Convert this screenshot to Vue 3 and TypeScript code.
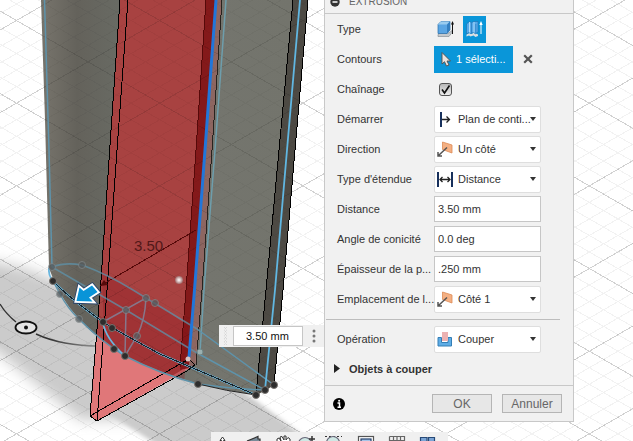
<script setup lang="ts">
import { computed, ref } from 'vue'

type IconName = 'start' | 'direction' | 'extent' | 'cut'

interface Field {
  id: string
  label: string
  kind: 'select' | 'text'
  value: string
  icon?: IconName
}

interface GridLine {
  d: string
}

interface Dot {
  x: number
  y: number
  tone: 'dark' | 'soft'
}

const fields = ref<Field[]>([
  { id: 'start', label: 'Démarrer', kind: 'select', value: 'Plan de conti...', icon: 'start' },
  { id: 'direction', label: 'Direction', kind: 'select', value: 'Un côté', icon: 'direction' },
  { id: 'extent', label: "Type d'étendue", kind: 'select', value: 'Distance', icon: 'extent' },
  { id: 'distance', label: 'Distance', kind: 'text', value: '3.50 mm' },
  { id: 'taper', label: 'Angle de conicité', kind: 'text', value: '0.0 deg' },
  { id: 'thickness', label: 'Épaisseur de la p...', kind: 'text', value: '.250 mm' },
  { id: 'wall', label: 'Emplacement de l...', kind: 'select', value: 'Côté 1', icon: 'direction' },
])
const operation: Field = { id: 'operation', label: 'Opération', kind: 'select', value: 'Couper', icon: 'cut' }
const chaining = ref(true)
const quickDistance = ref('3.50 mm')

// Isometric floor grid: every fifth line is a major one.
const STEP = 82.67 / 5
const SLOPE = 0.5773
const gridLines = (major: boolean): GridLine[] => {
  const lines: GridLine[] = []
  for (let k = -30; k < 60; k++) {
    if ((k % 5 === 0) !== major) continue
    const y = 20.5 + k * STEP
    const left = 16.5 * SLOPE
    const right = (633 - 16.5) * SLOPE
    lines.push({ d: `M0 ${(y - left).toFixed(1)}L633 ${(y + right).toFixed(1)}` })
    lines.push({ d: `M0 ${(y + left).toFixed(1)}L633 ${(y - right).toFixed(1)}` })
  }
  return lines
}
const majorPath = computed(() => gridLines(true).map((l) => l.d).join(''))
const minorPath = computed(() => gridLines(false).map((l) => l.d).join(''))

const dots: Dot[] = [
  { x: 52, y: 267, tone: 'soft' },
  { x: 82, y: 265, tone: 'soft' },
  { x: 60, y: 294, tone: 'soft' },
  { x: 79, y: 319, tone: 'soft' },
  { x: 126, y: 310, tone: 'soft' },
  { x: 146, y: 298, tone: 'soft' },
  { x: 155, y: 303, tone: 'soft' },
  { x: 137, y: 336, tone: 'soft' },
  { x: 53, y: 281, tone: 'dark' },
  { x: 103, y: 322, tone: 'dark' },
  { x: 112, y: 328, tone: 'dark' },
  { x: 114, y: 349, tone: 'dark' },
  { x: 125, y: 356, tone: 'dark' },
  { x: 198, y: 384, tone: 'dark' },
  { x: 256, y: 395, tone: 'dark' },
  { x: 265, y: 390, tone: 'dark' },
  { x: 274, y: 385, tone: 'dark' },
]
</script>

<template>
  <main class="workspace">
    <svg class="scene" viewBox="0 0 633 441" preserveAspectRatio="xMidYMin slice" aria-hidden="true">
      <defs>
        <linearGradient id="bodyShade" x1="42" x2="293" y1="0" y2="0" gradientUnits="userSpaceOnUse">
          <stop offset="0" stop-color="#77746c" />
          <stop offset="0.14" stop-color="#64625b" />
          <stop offset="0.3" stop-color="#686a63" />
          <stop offset="0.65" stop-color="#74756e" />
          <stop offset="1" stop-color="#73746c" />
        </linearGradient>
        <linearGradient id="arcFade" x1="0" x2="100" y1="0" y2="0" gradientUnits="userSpaceOnUse">
          <stop offset="0.5" stop-color="#333" />
          <stop offset="1" stop-color="#999" />
        </linearGradient>
        <radialGradient id="pearl">
          <stop offset="0" stop-color="#fff" />
          <stop offset="0.5" stop-color="#d5bcbc" />
          <stop offset="1" stop-color="#a06a6a" />
        </radialGradient>
        <filter id="soft" x="-20%" y="-20%" width="140%" height="140%">
          <feGaussianBlur stdDeviation="7" />
        </filter>
        <filter id="softer" x="-20%" y="-20%" width="140%" height="140%">
          <feGaussianBlur stdDeviation="2" />
        </filter>
        <clipPath id="bodyClip">
          <path d="M41 0H308L295 150L283 290L274 385L265 391L256 395Q225 390 198 384Q155 371 125 356Q90 333 79 319Q58 296 49 268L45 120Z" />
        </clipPath>
      </defs>

      <rect width="633" height="441" fill="#fff" />
      <path d="M-30 260Q30 262 70 290L180 330V420H80L-30 330Z" fill="#cbcbcb" filter="url(#soft)" />
      <path d="M-20 279L60 289L200 350L243 391L322 450H165L83 397Q35 363 -20 333Z" fill="#cbcbcb" filter="url(#softer)" />
      <g fill="none" stroke="#000" shape-rendering="crispEdges">
        <path :d="minorPath" opacity="0.05" />
        <path :d="majorPath" opacity="0.18" />
      </g>

      <!-- construction arc and origin -->
      <path d="M0 304Q6 314 16 322M36 334Q62 346 100 346" fill="none" stroke="url(#arcFade)" stroke-width="1.4" />
      <ellipse cx="26" cy="327.500" rx="10.500" ry="6" fill="#e4e4e4" stroke="#111" stroke-width="1.800" />
      <circle cx="26" cy="327.500" r="2" fill="#111" />

      <!-- solid body -->
      <g clip-path="url(#bodyClip)">
        <rect x="40" width="270" height="400" fill="url(#bodyShade)" />
        <path d="M293 0H308L295 150L283 290L274 385L256 395L266 290L279 150Z" fill="#4d4a44" />
      </g>

      <!-- cut preview -->
      <path d="M120 0L110 145L101 280L90 416L97 421L195 365L202 290L212 150L222 0Z" fill="#e07779" />
      <g clip-path="url(#bodyClip)">
        <path d="M120 0L110 145L101 280L90 416L97 421L182 370L186 290L196 150L206 0Z" fill="#a84241" />
        <path d="M206 0L196 150L186 290L180 370L189 368L195 290L205 150L216 0Z" fill="#84191a" />
        <path d="M216 0L205 150L194.500 290L189 368L195 365L202 290L212 150L222 0Z" fill="#8d6661" />
        <path d="M102 272Q150 297 188 326L184 385Q140 372 104 340Z" fill="#8c1018" opacity="0.28" />
        <g fill="none" stroke="#000" shape-rendering="crispEdges">
          <path :d="minorPath" opacity="0.03" />
          <path :d="majorPath" opacity="0.1" />
        </g>
      </g>

      <g fill="none" stroke="#000" shape-rendering="crispEdges">
        <path d="M120 0L110 145L101 280L90 416L97 421L107 290L117 150L128 0" />
        <path d="M90 416L180 364L189 359M97 421L187 371L195 365L189 359" />
        <path d="M206 0L196 150L186 290L180 367" stroke="#560909" />
        <path d="M222 0L212 150L202 290L196 365" stroke="#28231f" />
        <path d="M293 0L279 150L266 290L256 395" />
        <path d="M308 0L295 150L283 290L274 385" />
        <path d="M100 286L196 230" stroke="#560909" />
      </g>
      <path d="M100 286L104 280L108 285Z" fill="#560909" />
      <text x="134" y="251" class="dimension">3.50</text>

      <!-- sketch geometry -->
      <g fill="none" stroke="#5e93ab" stroke-width="1.500">
        <path d="M44.500 0L49 150L52 267" />
        <path d="M226 0L215 150L204 290L200 352" stroke="#6e9eac" />
        <path d="M52 267Q65 262 82 265Q107 274 133 290L146 298L197 329" opacity="0.75" />
        <path d="M52 267L126 310L197 353" opacity="0.75" />
        <path d="M197 329L274 385M197 353L265 390" />
        <path d="M53 281L60 294Q68 309 79 319Q103 343 125 356Q160 374 198 384Q232 389 265 390" />
        <path d="M103 322L146 298Q145 320 137 336L125 356L126 310" stroke="#86778b" />
      </g>
      <path d="M103 322Q105 338 125 356M49 268Q48 275 53 281" fill="none" stroke="#68b6df" stroke-width="1.800" />
      <path d="M53 281Q68 297 103 322Q119 332 160 354L256 395" fill="none" stroke="#61abcf" stroke-width="2" />
      <path d="M53 281Q68 297 103 322Q119 332 160 354L256 395" fill="none" stroke="#17222a" shape-rendering="crispEdges" />
      <path d="M198 384Q226 391 256 395" fill="none" stroke="#222" />
      <path d="M300 0L287 150L275 290L265 390" fill="none" stroke="#61b7e2" stroke-width="1.800" />
      <path d="M216 0L205 150L194.500 290L189 357" fill="none" stroke="#2176da" stroke-width="3" />

      <g v-for="dot in dots" :key="`${dot.x}-${dot.y}`" :class="['dot', dot.tone]">
        <circle :cx="dot.x" :cy="dot.y" r="3.500" />
      </g>
      <circle cx="200" cy="352" r="3" fill="#9bb0b0" stroke="#6e8484" />
      <circle cx="188" cy="359" r="2.500" fill="#d9c5c5" />
      <circle cx="179" cy="280" r="4" fill="url(#pearl)" />

      <g class="manipulator" fill="#0994d8">
        <path d="M76.500 301L79.500 287.500L83.500 291L92 285.500L97.500 292L89 297.500L92.500 301.500Z" stroke="#26436b" stroke-width="5.500" />
        <path d="M76.500 301L79.500 287.500L83.500 291L92 285.500L97.500 292L89 297.500L92.500 301.500Z" stroke="#fff" stroke-width="3.800" />
      </g>
    </svg>

    <form class="quick" @submit.prevent>
      <svg class="grip" viewBox="0 0 8 20" aria-hidden="true">
        <path d="M2 1L5 4L2 7L5 10L2 13L5 16L2 19M5 1L2 4L5 7L2 10L5 13L2 16L5 19" fill="none" stroke="#cfcfcf" stroke-dasharray="1 1" />
      </svg>
      <input v-model="quickDistance" class="quick-input" type="text" aria-label="Distance" />
      <button class="quick-more" type="button" aria-label="Options">
        <svg viewBox="0 0 4 14"><g fill="#777"><circle cx="2" cy="2" r="1.500" /><circle cx="2" cy="7" r="1.500" /><circle cx="2" cy="12" r="1.500" /></g></svg>
      </button>
    </form>

    <nav class="navbar" aria-label="Navigation">
      <svg viewBox="0 0 237 20" aria-hidden="true">
        <g fill="none" stroke="#333" stroke-width="1.200">
          <path d="M9 8.500L11.500 5L14 8.500H12.500V16H10.500V8.500Z" fill="#fff" stroke-width="1" />
          <path d="M36 9L47 4.500V7H49V12" fill="#788a98" />
          <path d="M66 10V7L68 6L70 9L69 5L71 4.500L73 8V4L75 4V8L77 5.500L79 7V12" fill="#fff" stroke-width="1" />
          <circle cx="94" cy="12" r="6.500" fill="#cfe7e4" stroke="#667" />
          <path d="M98 7H104M101 4V10" stroke-width="1.500" />
          <path d="M114 4.500H131" stroke-dasharray="2 2" />
          <circle cx="122" cy="11" r="6.500" fill="#cfe7e4" stroke="#667" />
          <rect x="147.500" y="4.500" width="15" height="14" fill="#fff" stroke="#555" />
          <rect x="150" y="7" width="10" height="8" fill="#a6c4e8" stroke="#23406b" />
          <path d="M178.500 4.500H193.500V18M178.500 4.500V18M182.500 4V18M186 4V18M189.500 4V18M178 8.500H194" stroke="#666" />
          <path d="M209.500 5.500H216V12H209.500ZM217.500 5.500H223.500V12H217.500Z" fill="#7ba5d6" stroke="#274a78" />
        </g>
      </svg>
    </nav>

    <section class="panel" aria-label="Extrusion">
      <header class="head">
        <svg viewBox="0 0 10 10" aria-hidden="true"><circle cx="5" cy="5" r="4.700" fill="#333" /><path d="M2.500 5H7.500" stroke="#fff" stroke-width="1.500" /></svg>
        <h2>EXTRUSION</h2>
      </header>

      <form class="form" @submit.prevent>
        <div class="row">
          <span class="label">Type</span>
          <div class="types">
            <button type="button" class="type" aria-label="Extrusion">
              <svg viewBox="0 0 17 18">
                <path d="M1 14.500L3 13H12L15 10.500V12.500L12 16.500H1Z" fill="#c5c9cc" stroke="#7c858c" stroke-width="0.600" />
                <path d="M1 4.500L4 1.500H13V10L10 13.500H1Z" fill="#5aa5e3" stroke="#276da9" stroke-width="0.700" />
                <path d="M1 4.500L4 1.500H13L10 4.500Z" fill="#9accef" /><path d="M10 4.500L13 1.500V10L10 13.500Z" fill="#347fc0" />
                <path d="M15.500 14V3" stroke="#111" /><path d="M14 4.500L15.500 1L17 4.500Z" fill="#111" />
              </svg>
            </button>
            <button type="button" class="type active" aria-label="Extrusion fine" aria-pressed="true">
              <svg viewBox="0 0 17 18">
                <path d="M0.500 14.500L3.500 13L5.500 14L8 12.500L12 14.500V16L9.500 17L7.500 15.500L4.500 16.500L3 15.500L0.500 16.500Z" fill="#dadfe2" />
                <path d="M0.500 4L3.500 1.500L5.500 2.500L8 1.500H12V11.500L9.500 14L7.500 12.500L4.500 13.500L3 12.500L0.500 14Z" fill="#58aaea" stroke="#1f6fae" stroke-width="0.600" />
                <path d="M3.500 2V12.500M8 2V12.500" stroke="#b0dcf9" />
                <path d="M5.500 3V13M9.800 4V13.500" stroke="#2b7dbf" stroke-width="0.800" />
                <path d="M15 14V3" stroke="#fff" /><path d="M13.300 5L15 1L16.700 5Z" fill="#fff" />
              </svg>
            </button>
          </div>
        </div>

        <div class="row">
          <span class="label">Contours</span>
          <div class="picker">
            <button type="button" class="selection">
              <svg viewBox="0 0 10 15" aria-hidden="true"><path d="M1 0.500V12L3.500 9.700L5.500 14L8 13L6 9H9.500Z" fill="#e9e4e0" stroke="#554c48" stroke-width="0.900" /></svg>
              1 sélecti...
            </button>
            <button type="button" class="clear" aria-label="Effacer">
              <svg viewBox="0 0 10 10"><path d="M1.200 1.200L8.800 8.800M8.800 1.200L1.200 8.800" stroke="#555" stroke-width="2.200" /></svg>
            </button>
          </div>
        </div>

        <div class="row">
          <label class="label" for="chaining">Chaînage</label>
          <span class="check">
            <input id="chaining" v-model="chaining" type="checkbox" />
            <svg v-if="chaining" viewBox="0 0 13 13" aria-hidden="true"><path d="M3 6.500L5.500 10L10.500 2.500" fill="none" stroke="#111" stroke-width="1.600" /></svg>
          </span>
        </div>

        <template v-for="field in [...fields, operation]" :key="field.id">
          <hr v-if="field.id === 'operation'" class="rule" />
          <div class="row">
            <label class="label" :for="field.id">{{ field.label }}</label>
            <input v-if="field.kind === 'text'" :id="field.id" v-model="field.value" class="text" type="text" />
            <span v-else class="choice">
              <svg class="glyph" viewBox="0 0 16 16" aria-hidden="true">
                <g v-if="field.icon === 'start'" fill="none" stroke="#17305c">
                  <path d="M4 1V16" stroke-width="2" /><path d="M5 8.500H12M9.500 5.500L12.500 8.500L9.500 11.500" stroke="#222" stroke-width="1.300" />
                </g>
                <g v-else-if="field.icon === 'extent'" fill="none" stroke="#17305c">
                  <path d="M1 1V16M15 1V16" stroke-width="2" /><path d="M3 8.500H13M5.500 6L3 8.500L5.500 11M10.500 6L13 8.500L10.500 11" stroke="#222" stroke-width="1.300" />
                </g>
                <g v-else-if="field.icon === 'direction'">
                  <path d="M5.500 1L15 4V12L5.500 8.500Z" fill="#f4b083" stroke="#dd8a55" stroke-width="0.800" />
                  <path d="M10 6.500L1.500 14.500M1 11V15H5" fill="none" stroke="#555" stroke-width="1.500" />
                </g>
                <g v-else>
                  <path d="M1 6.500H4.500V11.500H11V6.500H14.500V15H1Z" fill="#5fade6" stroke="#347eb5" />
                  <rect x="5" y="1" width="6" height="9" fill="#ecb2b2" />
                </g>
              </svg>
              <select :id="field.id" v-model="field.value" class="select">
                <option>{{ field.value }}</option>
              </select>
              <svg class="caret" viewBox="0 0 6 4" aria-hidden="true"><path d="M0 0H6L3 4Z" fill="#333" /></svg>
            </span>
          </div>
        </template>

        <button type="button" class="group">
          <svg viewBox="0 0 6 9" aria-hidden="true"><path d="M0 0L6 4.500L0 9Z" fill="#222" /></svg>
          Objets à couper
        </button>

        <footer class="foot">
          <button type="button" class="info" aria-label="Informations">
            <svg viewBox="0 0 12 12"><circle cx="6" cy="6" r="6" fill="#000" /><path d="M4.500 5H6.500V9M4.500 9.200H8" fill="none" stroke="#fff" stroke-width="1.500" /><circle cx="6.100" cy="2.800" r="1" fill="#fff" /></svg>
          </button>
          <button type="submit" class="action">OK</button>
          <button type="button" class="action">Annuler</button>
        </footer>
      </form>
    </section>
  </main>
</template>

<style>
body {
  margin: 0;
}
</style>

<style scoped>
.workspace {
  position: relative;
  height: 100vh;
  overflow: hidden;
  background: #fff;
  color: #333;
  font: 11px/14px "Liberation Sans", Arial, sans-serif;
}
.workspace *,
.workspace *::before {
  box-sizing: border-box;
}
button,
input,
select {
  margin: 0;
  font: inherit;
  color: inherit;
}
button {
  padding: 0;
  border: 0;
  background: none;
}
svg {
  display: block;
  flex: none;
}
.scene {
  width: 100%;
  height: 100%;
}
.dimension {
  font-size: 15px;
  fill: #521818;
}
.manipulator path {
  paint-order: stroke;
}
.dot.dark circle {
  fill: #2d2d2d;
  stroke: #77736f;
}
.dot.soft circle {
  fill: #555b5e;
  stroke: #80888a;
  opacity: 0.75;
}

.quick {
  position: absolute;
  left: 219px;
  top: 325px;
  display: flex;
  align-items: center;
  width: 106px;
  height: 22px;
  padding-left: 3px;
  background: #f0f0f0;
}
.grip {
  width: 8px;
  height: 20px;
}
.quick-input {
  width: 70px;
  height: 20px;
  margin-left: 3px;
  padding: 0 12px;
  border: 1px solid #c6c6c6;
  background: #fff;
  color: #111;
}
.quick-more {
  display: flex;
  flex: 1;
  justify-content: center;
}
.quick-more svg {
  width: 4px;
  height: 14px;
}

.navbar {
  position: absolute;
  left: 211px;
  top: 432px;
  width: 237px;
  background: #f0f0f0;
}

.panel {
  position: absolute;
  top: -10px;
  right: 59px;
  width: 250px;
  border: 1px solid #c8c8c8;
  background: #f1f1f1;
}
.head {
  display: flex;
  align-items: center;
  gap: 9px;
  height: 23px;
  padding-left: 5px;
  border-bottom: 1px solid #c8c8c8;
}
.head svg {
  width: 10px;
  height: 10px;
}
.head h2 {
  margin: 0;
  color: #666;
  font-size: 10px;
  font-weight: 400;
}
.row {
  display: flex;
  align-items: center;
  height: 30px;
  padding: 0 32px 0 12px;
}
.label {
  flex: none;
  width: 97px;
  white-space: nowrap;
}
.types {
  display: flex;
  gap: 6px;
}
.type {
  display: flex;
  align-items: center;
  justify-content: center;
  width: 23px;
  height: 27px;
}
.type.active {
  background: #0a96d9;
}
.type svg {
  width: 17px;
  height: 18px;
}
.picker {
  display: flex;
  align-items: center;
  gap: 10px;
}
.selection {
  display: flex;
  align-items: center;
  gap: 5px;
  width: 79px;
  height: 27px;
  padding-left: 7px;
  background: #0a96d9;
  color: #fff;
  white-space: nowrap;
}
.selection svg {
  width: 10px;
  height: 15px;
}
.clear svg {
  width: 10px;
  height: 10px;
}
.check {
  position: relative;
  width: 13px;
  height: 13px;
  margin-left: 5px;
}
.check input {
  display: block;
  width: 13px;
  height: 13px;
  appearance: none;
  border: 1px solid #555;
  border-radius: 3px;
  background: linear-gradient(#b8b8b8, #ededed);
}
.check svg {
  position: absolute;
  inset: 0;
  pointer-events: none;
}
.text {
  flex: 1;
  min-width: 0;
  height: 26px;
  padding: 0 3px;
  border: 1px solid #c6c6c6;
  background: #fff;
}
.choice {
  position: relative;
  flex: 1;
  min-width: 0;
}
.select {
  display: block;
  width: 100%;
  height: 27px;
  padding: 0 6px 0 23px;
  appearance: none;
  border: 1px solid #dedede;
  border-radius: 2px;
  background: #fff;
}
.glyph {
  position: absolute;
  left: 3px;
  top: 5px;
  width: 16px;
  height: 16px;
  pointer-events: none;
}
.caret {
  position: absolute;
  right: 5px;
  top: 11px;
  width: 6px;
  height: 4px;
  pointer-events: none;
}
.rule {
  height: 1px;
  margin: 5px 13px 4px 1px;
  border: 0;
  background: #bdbdbd;
}
.group {
  display: flex;
  align-items: center;
  gap: 9px;
  height: 29px;
  padding-left: 9px;
  font-weight: 700;
}
.group svg {
  width: 6px;
  height: 9px;
}
.foot {
  display: flex;
  align-items: center;
  gap: 10px;
  height: 36px;
  margin-top: 2px;
  padding: 0 11px 0 8px;
  border-top: 1px solid #c8c8c8;
}
.info {
  margin-right: auto;
}
.info svg {
  width: 12px;
  height: 12px;
}
.action {
  width: 60px;
  height: 19px;
  border: 1px solid #b5b5b5;
  background: #e7e7e7;
  color: #666;
  font-size: 12px;
}
</style>
